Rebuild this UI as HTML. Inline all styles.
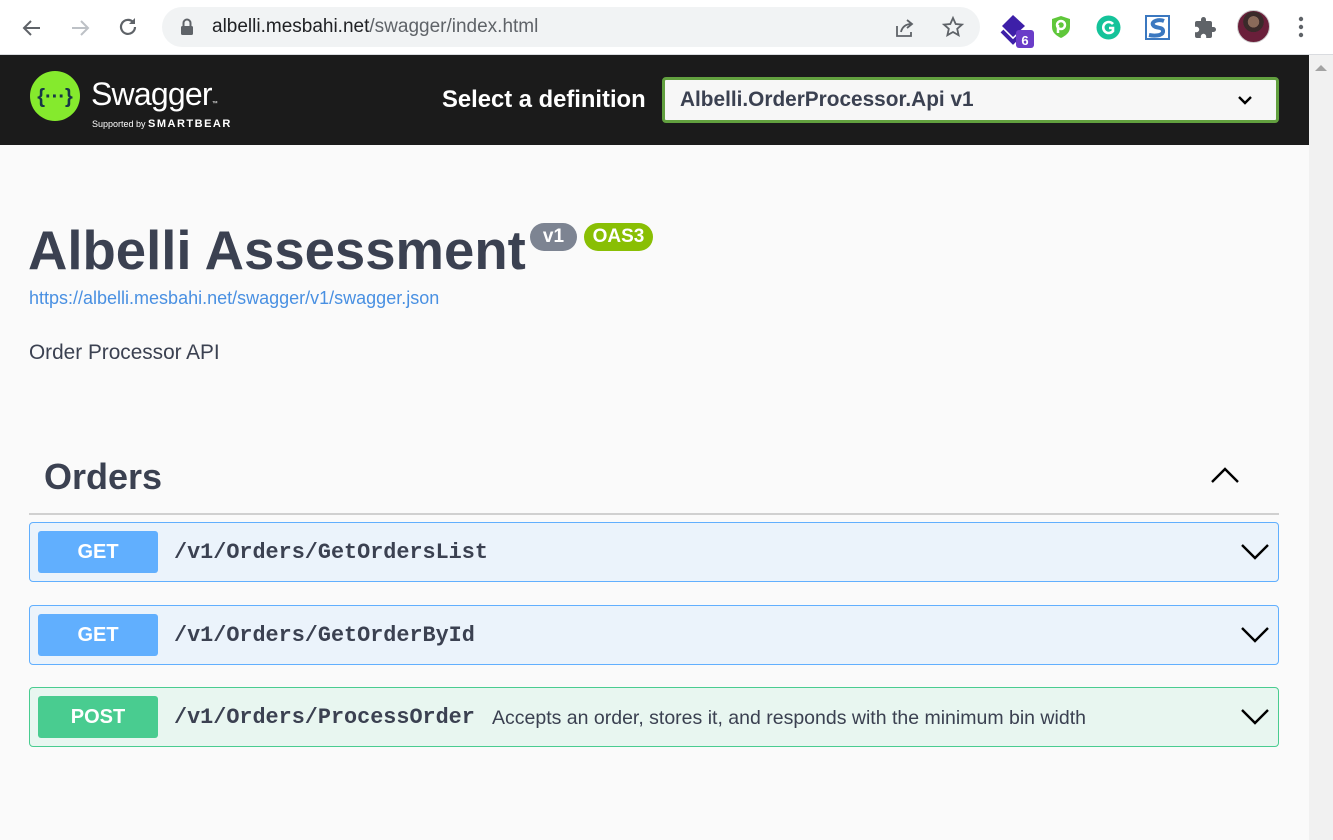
<!DOCTYPE html>
<html><head><meta charset="utf-8"><style>
*{margin:0;padding:0;box-sizing:border-box}
body{width:1333px;height:840px;overflow:hidden;background:#fafafa;font-family:"Liberation Sans",Arial,sans-serif;position:relative}
.abs{position:absolute}
.chrome{left:0;top:0;width:1333px;height:55px;background:#fff;border-bottom:1px solid #dadce0}
.pill{left:162px;top:7px;width:818px;height:40px;background:#f1f3f4;border-radius:20px}
.url{left:212px;top:16px;font-size:19px;color:#202124}
.url span{color:#5f6368}
.top{left:0;top:55px;width:1309px;height:90px;background:#1b1b1b}
.scroll{left:1309px;top:55px;width:24px;height:785px;background:#f1f1f1}
.op{left:29px;width:1250px;height:60px;border-radius:4px;border:1px solid #61affe;background:#ebf3fb}
.op .m{position:absolute;left:8px;top:8px;width:120px;height:42px;border-radius:3px;background:#61affe;color:#fff;font-weight:bold;font-size:20px;text-align:center;line-height:42px}
.op .p{position:absolute;left:144px;top:17px;font-family:"Liberation Mono",monospace;font-weight:bold;font-size:21.8px;color:#3b4151}
.op .d{position:absolute;left:462px;top:19px;font-size:19.5px;color:#3b4151}
.op svg{position:absolute;right:8px;top:18px}
</style></head><body>
<div class="abs chrome"></div>
<svg class="abs" style="left:20px;top:16px" width="24" height="24" viewBox="0 0 24 24"><path d="M20 12H5M11 5l-7 7 7 7" fill="none" stroke="#5f6368" stroke-width="2"/></svg>
<svg class="abs" style="left:68px;top:16px" width="24" height="24" viewBox="0 0 24 24"><path d="M4 12h15M13 5l7 7-7 7" fill="none" stroke="#bdc1c6" stroke-width="2"/></svg>
<svg class="abs" style="left:116px;top:15px" width="24" height="24" viewBox="0 0 24 24"><path d="M19 12a7 7 0 1 1-2-5" fill="none" stroke="#5f6368" stroke-width="2.2"/><path d="M19 3v6h-6z" fill="#5f6368"/></svg>
<div class="abs pill"></div>
<svg class="abs" style="left:180px;top:18px" width="14" height="18" viewBox="0 0 14 18"><path d="M3.5 8V5a3.5 3.5 0 0 1 7 0v3" fill="none" stroke="#5f6368" stroke-width="2"/><rect x="1" y="8" width="12" height="9" rx="1.5" fill="#5f6368"/></svg>
<div class="abs url">albelli.mesbahi.net<span>/swagger/index.html</span></div>
<svg class="abs" style="left:893px;top:16px" width="24" height="24" viewBox="0 0 24 24"><path d="M4 10v10h14v-4M8 16c1-5 5-8 10-8M14 4l5 4-5 4" fill="none" stroke="#5f6368" stroke-width="1.8"/></svg>
<svg class="abs" style="left:941px;top:15px" width="24" height="24" viewBox="0 0 24 24"><path d="M12 3l2.7 6 6.3.6-4.8 4.2 1.4 6.4L12 17l-5.6 3.2 1.4-6.4L3 9.6 9.3 9z" fill="none" stroke="#5f6368" stroke-width="1.8"/></svg>
<svg class="abs" style="left:1000px;top:14px" width="36" height="34" viewBox="0 0 36 34"><path d="M2 12L13 1l12 11-12 11z" fill="#3d1fa8"/><path d="M2 17l11 11 5-5" fill="none" stroke="#3d1fa8" stroke-width="4"/><rect x="16" y="16" width="18" height="18" rx="3" fill="#6a3cc8"/><text x="25" y="31" text-anchor="middle" font-family="Liberation Sans" font-weight="bold" font-size="13" fill="#fff">6</text></svg>
<svg class="abs" style="left:1050px;top:15px" width="22" height="24" viewBox="0 0 22 24"><path d="M11 1l9 3v8c0 6-5 9-9 11-4-2-9-5-9-11V4z" fill="#5fc73a"/><circle cx="11" cy="10" r="4" fill="none" stroke="#fff" stroke-width="2.5"/><path d="M8 10v8" stroke="#fff" stroke-width="2.5"/></svg>
<svg class="abs" style="left:1096px;top:15px" width="25" height="25" viewBox="0 0 25 25"><circle cx="12.5" cy="12.5" r="12" fill="#15c39a"/><path d="M17 9a5.5 5.5 0 1 0 0 7v-3h-4" fill="none" stroke="#fff" stroke-width="2.6"/></svg>
<svg class="abs" style="left:1145px;top:15px" width="25" height="25" viewBox="0 0 25 25"><rect width="25" height="25" fill="#3b78c0"/><rect x="2" y="2" width="21" height="21" fill="#fff"/><path d="M19 6c-5-2-13 0-11 4s11 1 10 7c-1 4-9 4-14 3" fill="none" stroke="#3b78c0" stroke-width="4"/></svg>
<svg class="abs" style="left:1193px;top:16px" width="24" height="24" viewBox="0 0 24 24"><path d="M20.5 11H19V7a2 2 0 0 0-2-2h-4V3.5a2.5 2.5 0 0 0-5 0V5H4a2 2 0 0 0-2 2v3.8h1.5a2.7 2.7 0 0 1 0 5.4H2V20a2 2 0 0 0 2 2h3.8v-1.5a2.7 2.7 0 0 1 5.4 0V22H17a2 2 0 0 0 2-2v-4h1.5a2.5 2.5 0 0 0 0-5z" fill="#5f6368"/></svg>
<div class="abs" style="left:1237px;top:10px;width:33px;height:33px;border-radius:50%;background:radial-gradient(circle at 50% 35%,#8a6a5a 0 22%,#3a2a2a 23% 40%,#6a1f3a 41%);border:1px solid #ccc"></div>
<svg class="abs" style="left:1294px;top:15px" width="14" height="24" viewBox="0 0 14 24"><circle cx="7" cy="4" r="2.2" fill="#5f6368"/><circle cx="7" cy="12" r="2.2" fill="#5f6368"/><circle cx="7" cy="20" r="2.2" fill="#5f6368"/></svg>

<div class="abs top"></div>
<div class="abs scroll"></div>
<svg class="abs" style="left:1315px;top:64px" width="12" height="8"><path d="M0 7L6 1l6 6z" fill="#a3a3a3"/></svg>
<svg class="abs" style="left:29px;top:70px" width="52" height="52" viewBox="0 0 52 52"><circle cx="26" cy="26" r="25" fill="#85ea2d"/><text x="26" y="33" text-anchor="middle" font-family="Liberation Sans" font-weight="bold" font-size="20" fill="#173647">{···}</text></svg>
<div class="abs" style="left:91px;top:76px;font-size:32px;color:#fff;letter-spacing:-0.8px">Swagger<span style="font-size:6px">™</span></div>
<div class="abs" style="left:92px;top:118px;font-size:9px;color:#fff">Supported by <b style="font-size:11px;letter-spacing:1.5px">SMARTBEAR</b></div>
<div class="abs" style="left:442px;top:86px;font-size:23.8px;font-weight:bold;color:#fff">Select a definition</div>
<div class="abs" style="left:662px;top:77px;width:617px;height:46px;background:#f7f7f7;border:3px solid #62a03f;border-radius:4px"></div>
<div class="abs" style="left:680px;top:88px;font-size:20.8px;font-weight:bold;color:#3b4151">Albelli.OrderProcessor.Api v1</div>
<svg class="abs" style="left:1237px;top:94px" width="16" height="12"><path d="M2 3l6 6 6-6" fill="none" stroke="#000" stroke-width="2.4"/></svg>

<div class="abs" style="left:28px;top:219px;font-size:54.5px;font-weight:bold;color:#3b4151">Albelli Assessment</div>
<div class="abs" style="left:530px;top:223px;width:47px;height:28px;border-radius:14px;background:#7d8492;color:#fff;font-weight:bold;font-size:19px;text-align:center;line-height:28px">v1</div>
<div class="abs" style="left:584px;top:223px;width:69px;height:28px;border-radius:14px;background:#89bf04;color:#fff;font-weight:bold;font-size:19px;text-align:center;line-height:28px">OAS3</div>
<div class="abs" style="left:29px;top:288px;font-size:18px;color:#4990e2">https://albelli.mesbahi.net/swagger/v1/swagger.json</div>
<div class="abs" style="left:29px;top:341px;font-size:20.8px;color:#3b4151">Order Processor API</div>

<div class="abs" style="left:44px;top:456px;font-size:36px;font-weight:bold;color:#3b4151">Orders</div>
<svg class="abs" style="left:1209px;top:465px" width="32" height="20"><path d="M3 17L16 4l13 13" fill="none" stroke="#000" stroke-width="2.4"/></svg>
<div class="abs" style="left:29px;top:513px;width:1250px;height:2px;background:#d0d0d0"></div>

<div class="abs op" style="top:522px"><div class="m">GET</div><div class="p">/v1/Orders/GetOrdersList</div><svg width="30" height="20"><path d="M2 4l13 13 13-13" fill="none" stroke="#000" stroke-width="2.4"/></svg></div>
<div class="abs op" style="top:605px"><div class="m">GET</div><div class="p">/v1/Orders/GetOrderById</div><svg width="30" height="20"><path d="M2 4l13 13 13-13" fill="none" stroke="#000" stroke-width="2.4"/></svg></div>
<div class="abs op" style="top:687px;border-color:#49cc90;background:#e8f6f0"><div class="m" style="background:#49cc90">POST</div><div class="p">/v1/Orders/ProcessOrder</div><div class="d">Accepts an order, stores it, and responds with the minimum bin width</div><svg width="30" height="20"><path d="M2 4l13 13 13-13" fill="none" stroke="#000" stroke-width="2.4"/></svg></div>
</body></html>
